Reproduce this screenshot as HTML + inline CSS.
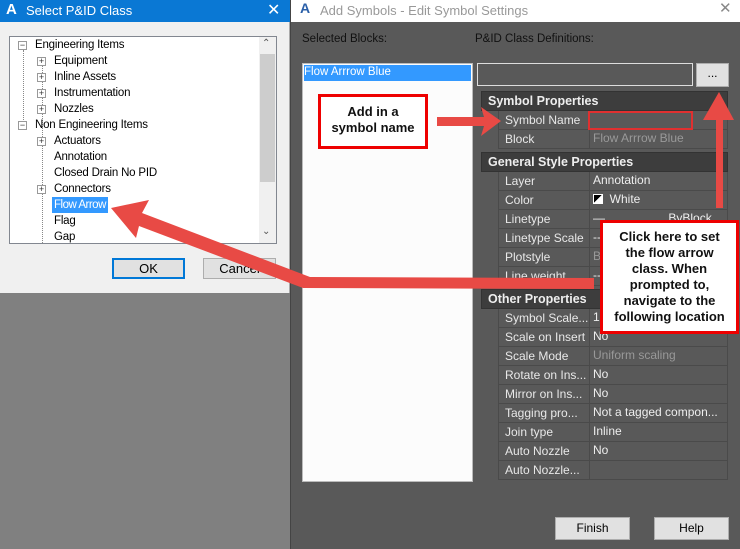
<!DOCTYPE html>
<html><head><meta charset="utf-8"><style>
*{margin:0;padding:0;box-sizing:border-box}
body{width:740px;height:549px;overflow:hidden;position:relative;background:#808080;font-family:"Liberation Sans",sans-serif;font-size:12px}
.a{position:absolute}
.t{position:absolute;white-space:nowrap}
.row{position:absolute;left:498px;width:230px;height:19px;border-bottom:1px solid #4a4a4a;border-left:1px solid #4a4a4a;border-right:1px solid #4a4a4a}
.row .n{position:absolute;left:6px;top:2px;color:#e8e8e8}
.row .v{position:absolute;left:90px;top:0;height:18px;border-left:1px solid #4a4a4a;width:139px;padding-left:3px;padding-top:1px;color:#eee;white-space:nowrap;overflow:hidden}
.hdr{position:absolute;left:481px;width:247px;height:20px;background:#3d3d3d;border:1px solid #333;color:#eee;font-weight:bold;font-size:12.5px;padding:2px 0 0 6px}
.tree{position:absolute;color:#000;font-size:11.5px;letter-spacing:-0.2px}
.pm{position:absolute;width:9px;height:9px;border:1px solid #999;background:#fff;font-size:9px;line-height:7px;text-align:center;color:#333}
.btn{position:absolute;background:#e1e1e1;border:1px solid #adadad;text-align:center;font-size:12px;color:#000}
</style></head><body>
<div class="a" style="left:0;top:0;width:290px;height:293px;background:#f0f0f0;border-right:1px solid #aaa"></div>
<div class="a" style="left:0;top:0;width:290px;height:22px;background:#0a78d4"></div>
<div class="t" style="left:6px;top:1px;color:#fff;font-size:15px;font-weight:bold">A</div>
<div class="t" style="left:26px;top:3px;color:#fff;font-size:13px">Select P&amp;ID Class</div>
<div class="t" style="left:267px;top:0px;color:#fff;font-size:16px">✕</div>
<div class="a" style="left:9px;top:36px;width:268px;height:208px;background:#fff;border:1px solid #828790"></div>
<div class="a" style="left:259px;top:37px;width:17px;height:206px;background:#f0f0f0"></div>
<div class="a" style="left:260px;top:54px;width:15px;height:128px;background:#cdcdcd"></div>
<div class="t" style="left:262px;top:38px;font-size:10px;color:#555">⌃</div>
<div class="t" style="left:262px;top:226px;font-size:10px;color:#555">⌄</div>
<div class="a" style="left:23px;top:50px;height:70px;border-left:1px dotted #888"></div>
<div class="a" style="left:42px;top:66px;height:177px;border-left:1px dotted #888"></div>
<div class="pm" style="left:18px;top:41px">−</div>
<div class="tree" style="left:35px;top:39px">Engineering Items</div>
<div class="pm" style="left:37px;top:57px">+</div><div class="tree" style="left:54px;top:55px">Equipment</div>
<div class="pm" style="left:37px;top:73px">+</div><div class="tree" style="left:54px;top:71px">Inline Assets</div>
<div class="pm" style="left:37px;top:89px">+</div><div class="tree" style="left:54px;top:87px">Instrumentation</div>
<div class="pm" style="left:37px;top:105px">+</div><div class="tree" style="left:54px;top:103px">Nozzles</div>
<div class="pm" style="left:18px;top:121px">−</div><div class="tree" style="left:35px;top:119px">Non Engineering Items</div>
<div class="pm" style="left:37px;top:137px">+</div><div class="tree" style="left:54px;top:135px">Actuators</div>
<div class="tree" style="left:54px;top:151px">Annotation</div>
<div class="tree" style="left:54px;top:167px">Closed Drain No PID</div>
<div class="pm" style="left:37px;top:185px">+</div><div class="tree" style="left:54px;top:183px">Connectors</div>
<div class="a" style="left:52px;top:197px;width:56px;height:16px;background:#3399ff"></div>
<div class="tree" style="left:54px;top:199px;color:#fff;letter-spacing:-0.5px">Flow Arrow</div>
<div class="tree" style="left:54px;top:215px">Flag</div>
<div class="tree" style="left:54px;top:231px">Gap</div>
<div class="btn" style="left:112px;top:258px;width:73px;height:21px;border:2px solid #0078d7;line-height:17px;font-size:13px">OK</div>
<div class="btn" style="left:203px;top:258px;width:73px;height:21px;line-height:19px;font-size:13px">Cancel</div>
<div class="a" style="left:290px;top:0;width:450px;height:549px;background:#595959;border-left:1px solid #444"></div>
<div class="a" style="left:291px;top:0;width:449px;height:22px;background:#fff"></div>
<div class="t" style="left:300px;top:0px;color:#2a5fa8;font-size:14px;font-weight:bold">A</div>
<div class="t" style="left:320px;top:3px;color:#999;font-size:13px">Add Symbols - Edit Symbol Settings</div>
<div class="t" style="left:719px;top:-1px;color:#888;font-size:15px">✕</div>
<div class="t" style="left:302px;top:33px;color:#111;font-size:11.5px">Selected Blocks:</div>
<div class="t" style="left:475px;top:33px;color:#111;font-size:11.5px">P&amp;ID Class Definitions:</div>
<div class="a" style="left:302px;top:63px;width:171px;height:419px;background:#fcfcfc;border:1px solid #bbb"></div>
<div class="a" style="left:304px;top:65px;width:167px;height:16px;background:#3399ff"></div>
<div class="t" style="left:304px;top:66px;color:#fff;font-size:11.5px">Flow Arrrow Blue</div>
<div class="a" style="left:477px;top:63px;width:216px;height:23px;border:1px solid #ddd;background:#595959"></div>
<div class="btn" style="left:696px;top:63px;width:33px;height:24px;line-height:18px">...</div>
<div class="hdr" style="top:91px">Symbol Properties</div>
<div class="row" style="top:111px"><span class="n">Symbol Name</span><span class="v"></span></div>
<div class="row" style="top:130px"><span class="n">Block</span><span class="v" style="color:#999">Flow Arrrow Blue</span></div>
<div class="hdr" style="top:152px">General Style Properties</div>
<div class="row" style="top:172px"><span class="n">Layer</span><span class="v">Annotation</span></div>
<div class="row" style="top:191px"><span class="n">Color</span><span class="v"><span style="display:inline-block;width:10px;height:10px;background:linear-gradient(135deg,#000 50%,#fff 50%);border:1px solid #fff;vertical-align:-1px"></span>&nbsp; White</span></div>
<div class="row" style="top:210px"><span class="n">Linetype</span><span class="v">—&nbsp;&nbsp;&nbsp;&nbsp;&nbsp;&nbsp;&nbsp;&nbsp;&nbsp;&nbsp;&nbsp;&nbsp;&nbsp;&nbsp;&nbsp;&nbsp;&nbsp;&nbsp; ByBlock</span></div>
<div class="row" style="top:229px"><span class="n">Linetype Scale</span><span class="v">--</span></div>
<div class="row" style="top:248px"><span class="n">Plotstyle</span><span class="v" style="color:#999">By</span></div>
<div class="row" style="top:267px"><span class="n">Line weight</span><span class="v">--</span></div>
<div class="hdr" style="top:289px">Other Properties</div>
<div class="row" style="top:309px"><span class="n">Symbol Scale...</span><span class="v">1.</span></div>
<div class="row" style="top:328px"><span class="n">Scale on Insert</span><span class="v">No</span></div>
<div class="row" style="top:347px"><span class="n">Scale Mode</span><span class="v" style="color:#999">Uniform scaling</span></div>
<div class="row" style="top:366px"><span class="n">Rotate on Ins...</span><span class="v">No</span></div>
<div class="row" style="top:385px"><span class="n">Mirror on Ins...</span><span class="v">No</span></div>
<div class="row" style="top:404px"><span class="n">Tagging pro...</span><span class="v">Not a tagged compon...</span></div>
<div class="row" style="top:423px"><span class="n">Join type</span><span class="v">Inline</span></div>
<div class="row" style="top:442px"><span class="n">Auto Nozzle</span><span class="v">No</span></div>
<div class="row" style="top:461px"><span class="n">Auto Nozzle...</span><span class="v"></span></div>
<div class="btn" style="left:555px;top:517px;width:75px;height:23px;line-height:21px">Finish</div>
<div class="btn" style="left:654px;top:517px;width:75px;height:23px;line-height:21px">Help</div>
<div class="a" style="left:588px;top:111px;width:105px;height:19px;border:2px solid #e03030"></div>
<svg class="a" style="left:0;top:0" width="740" height="549">
<g fill="#e84a45" stroke="none">
<path d="M437 117 L484 117 L481 107 L501 121 L481 136 L484 126 L437 126 Z"/>
<path d="M716 208 L716 120 L703 120 L719 92 L734 120 L723 120 L723 208 Z"/>
<path d="M594 278 L310 277 L142 213 L149 200 L111 208 L136 238 L139 226 L303 288 L594 289 Z"/>
</g>
</svg>
<div class="a" style="left:318px;top:94px;width:110px;height:55px;background:#fff;border:3px solid #e00;text-align:center;font-weight:bold;font-size:13px;line-height:16px;padding-top:7px;color:#111">Add in a<br>symbol name</div>
<div class="a" style="left:600px;top:220px;width:139px;height:114px;background:#fff;border:3px solid #e00;text-align:center;font-weight:bold;font-size:13px;line-height:16px;padding-top:6px;color:#111">Click here to set<br>the flow arrow<br>class. When<br>prompted to,<br>navigate to the<br>following location</div>
</body></html>
